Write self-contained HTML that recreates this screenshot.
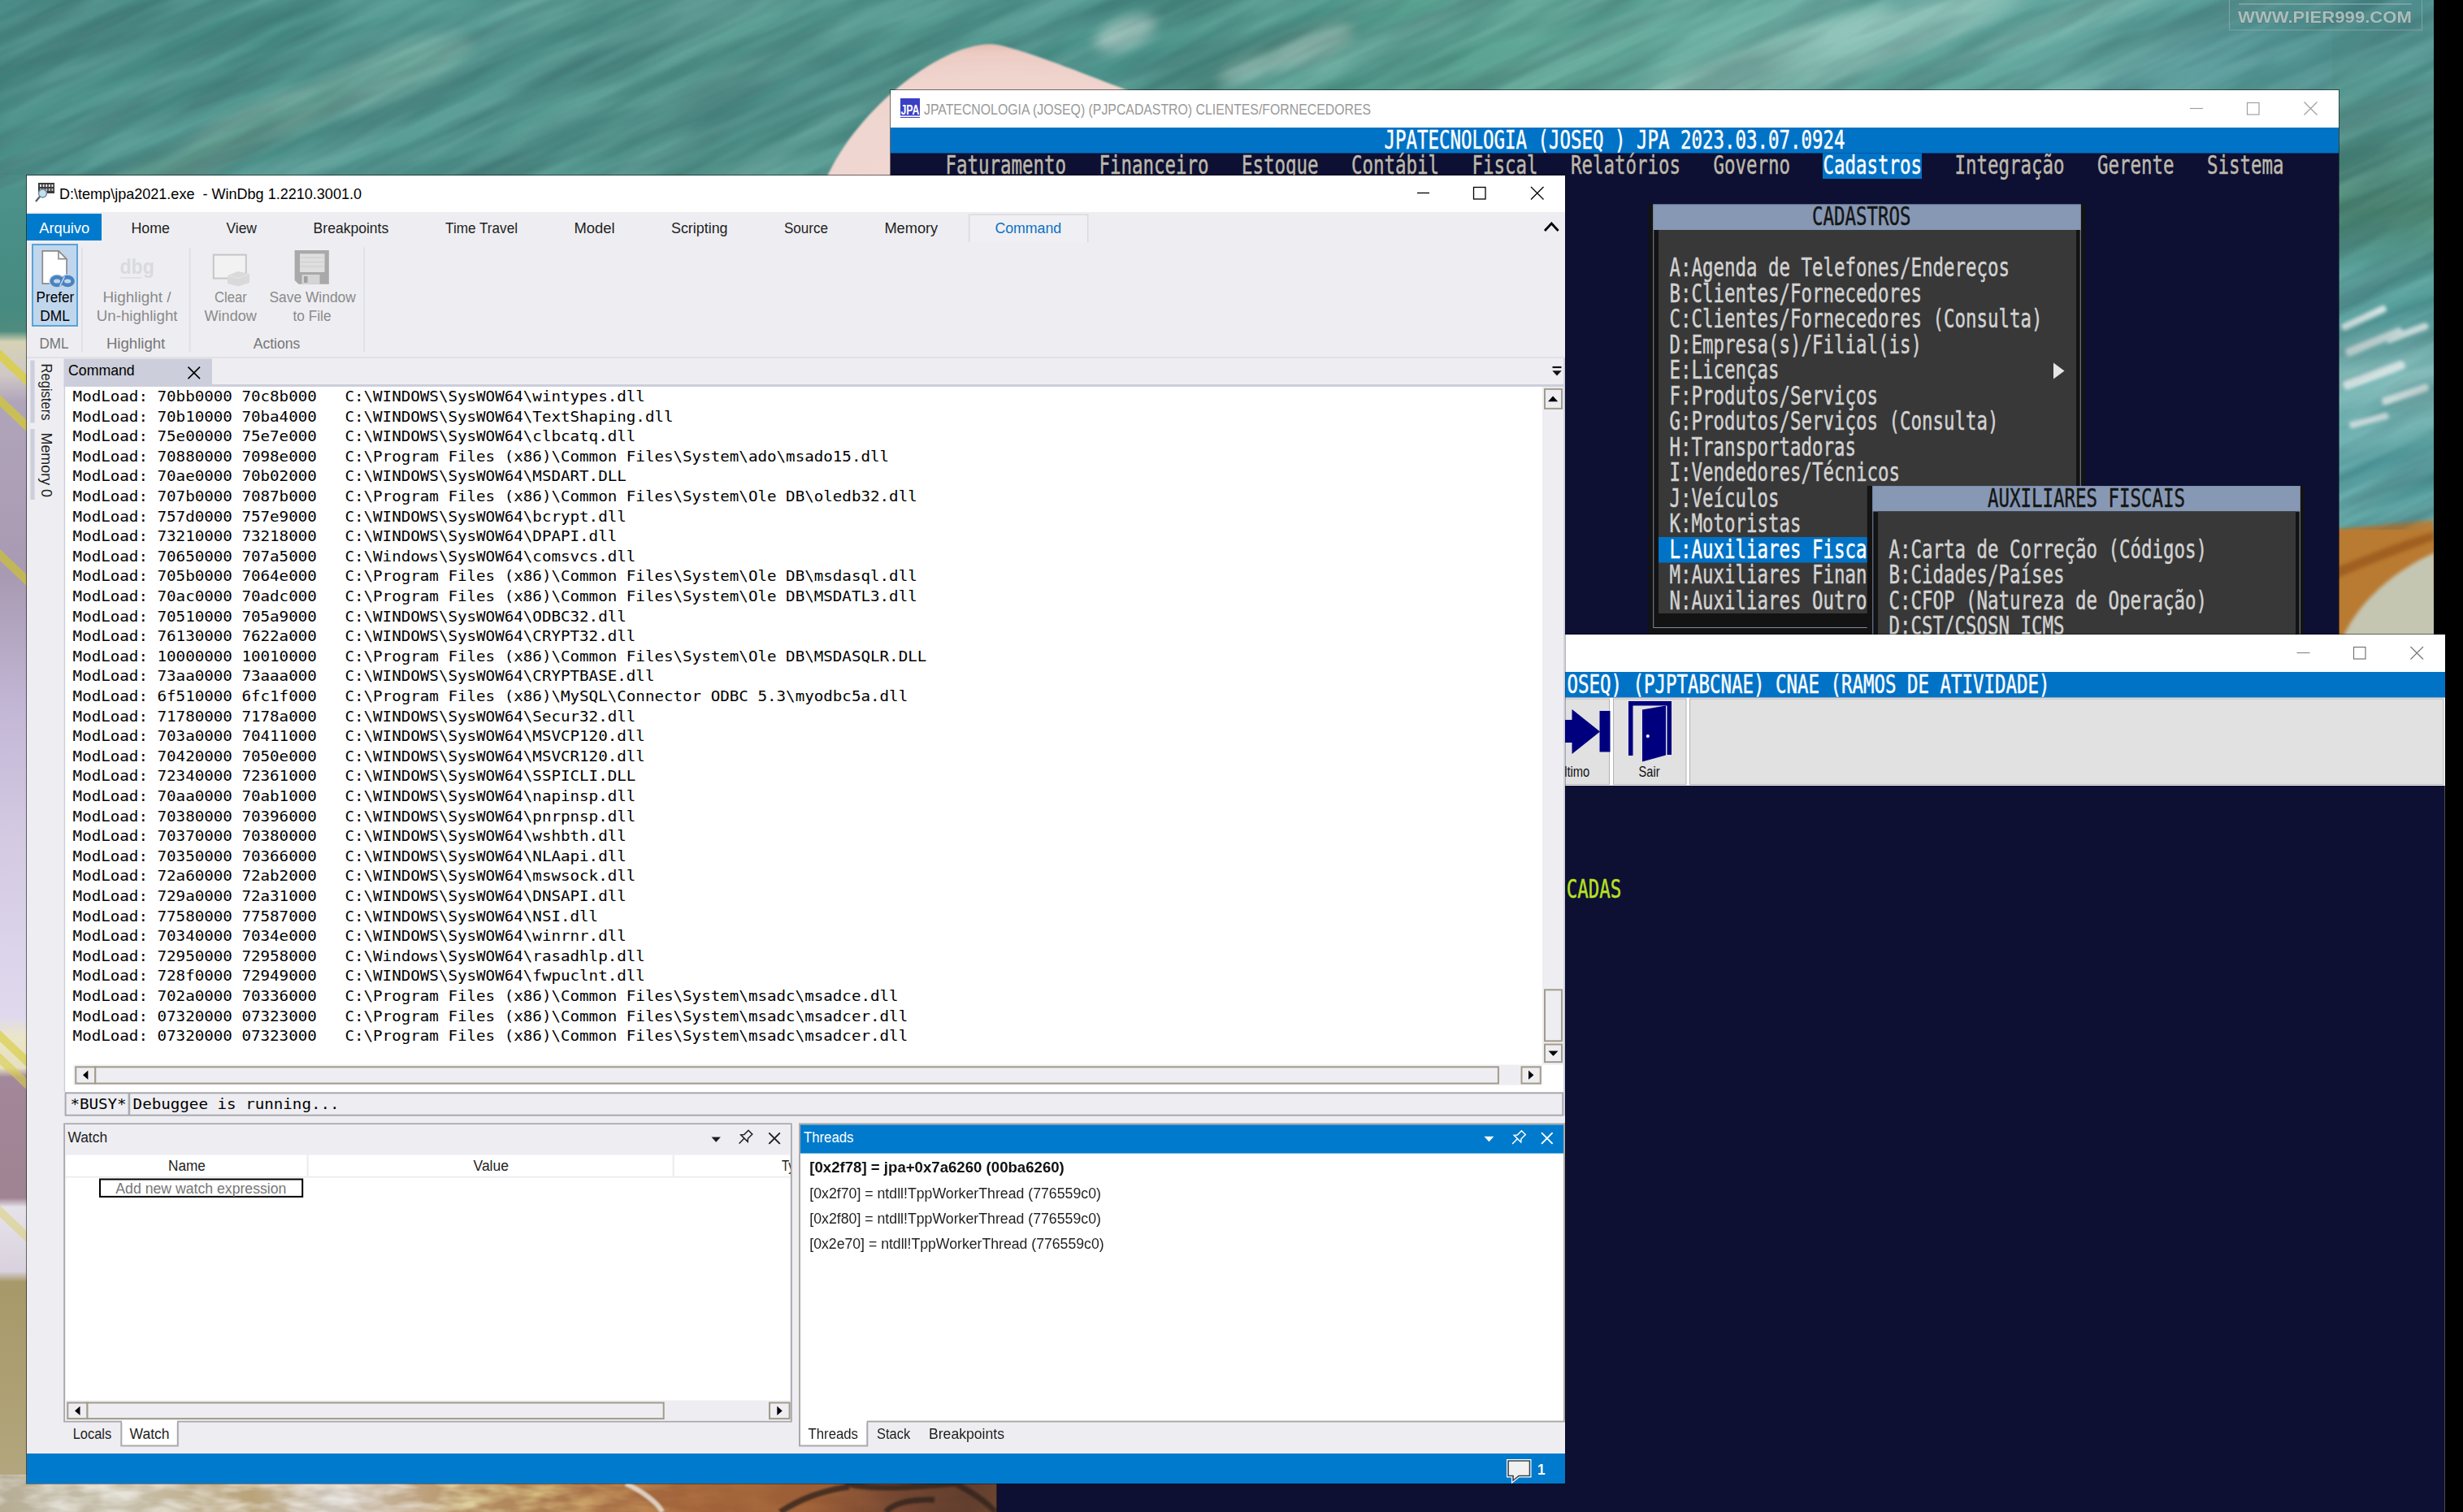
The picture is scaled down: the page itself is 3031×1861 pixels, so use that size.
<!DOCTYPE html>
<html lang="pt-BR"><head><meta charset="utf-8"><title>WinDbg - jpa2021.exe</title>
<style>
html,body{margin:0;padding:0;background:#000;overflow:hidden}
svg{display:block}
text{white-space:pre}
.s{font-family:"Liberation Sans",Arial,sans-serif}
.m{font-family:"Liberation Mono","DejaVu Sans Mono",monospace}
.d{font-family:"DejaVu Sans Mono","Liberation Mono",monospace}
</style></head><body>
<svg width="3031" height="1861" viewBox="0 0 3031 1861">
<defs>
<linearGradient id="gTop" x1="0" y1="0" x2="1" y2="0">
<stop offset="0" stop-color="#488d87"/><stop offset="0.15" stop-color="#50968f"/><stop offset="0.3" stop-color="#569a90"/><stop offset="0.45" stop-color="#4c938b"/><stop offset="0.6" stop-color="#57a08f"/><stop offset="0.74" stop-color="#69ada1"/><stop offset="0.86" stop-color="#5da29b"/><stop offset="1" stop-color="#529696"/>
</linearGradient>
<linearGradient id="gLeft" x1="0" y1="0" x2="0" y2="1">
<stop offset="0" stop-color="#4d938c"/><stop offset="0.1" stop-color="#468a80"/><stop offset="0.117" stop-color="#4f8c7e"/><stop offset="0.125" stop-color="#d6d2b4"/><stop offset="0.15" stop-color="#cfc8c6"/><stop offset="0.17" stop-color="#b0a4ba"/><stop offset="0.3" stop-color="#a89ab2"/><stop offset="0.4" stop-color="#c3b7d6"/><stop offset="0.5" stop-color="#d4cbe3"/><stop offset="0.63" stop-color="#e0d9ee"/><stop offset="0.645" stop-color="#ebe6c8"/><stop offset="0.668" stop-color="#e6dfc0"/><stop offset="0.675" stop-color="#a3879a"/><stop offset="0.765" stop-color="#a08493"/><stop offset="0.772" stop-color="#e6e2ea"/><stop offset="0.82" stop-color="#d9d2de"/><stop offset="0.828" stop-color="#a79969"/><stop offset="0.9" stop-color="#ad9f72"/><stop offset="1" stop-color="#b5a983"/>
</linearGradient>
<linearGradient id="gBot" x1="0" y1="0" x2="1" y2="0">
<stop offset="0" stop-color="#b7ad95"/><stop offset="0.12" stop-color="#c9c2ae"/><stop offset="0.25" stop-color="#b9a37a"/><stop offset="0.33" stop-color="#cfc7bd"/><stop offset="0.45" stop-color="#b8966a"/><stop offset="0.58" stop-color="#a9744a"/><stop offset="0.68" stop-color="#a3643a"/><stop offset="0.8" stop-color="#9c5e36"/><stop offset="0.9" stop-color="#704430"/><stop offset="0.96" stop-color="#5e3c2c"/><stop offset="1" stop-color="#6e4630"/>
</linearGradient>
<linearGradient id="gRight" x1="0" y1="0" x2="0" y2="1">
<stop offset="0" stop-color="#529696"/><stop offset="0.2" stop-color="#55968c"/><stop offset="0.33" stop-color="#4f8d76"/><stop offset="0.42" stop-color="#4f9892"/><stop offset="0.5" stop-color="#57a09e"/><stop offset="0.58" stop-color="#7fbab8"/><stop offset="0.66" stop-color="#6aadac"/><stop offset="0.72" stop-color="#559fa1"/><stop offset="0.82" stop-color="#5aa1a0"/><stop offset="0.845" stop-color="#b87a2e"/><stop offset="0.9" stop-color="#b9853f"/><stop offset="0.95" stop-color="#c9c3a6"/><stop offset="1" stop-color="#c4bfa2"/>
</linearGradient>
<radialGradient id="gSkin" cx="0.5" cy="1.0" r="1.02" gradientTransform="translate(0.03 0)">
<stop offset="0" stop-color="#f1d9d3"/><stop offset="0.75" stop-color="#efd5ce"/><stop offset="0.92" stop-color="#ecccc4"/><stop offset="1" stop-color="#e3b9ae"/>
</radialGradient>
<filter id="blur8" x="-10%" y="-10%" width="120%" height="120%"><feGaussianBlur stdDeviation="8"/></filter>
<filter id="tex" x="0" y="0" width="100%" height="100%"><feTurbulence type="fractalNoise" baseFrequency="0.004 0.035" numOctaves="3" seed="7"/><feColorMatrix type="matrix" values="0 0 0 0 0  0 0 0 0 0  0 0 0 0 0  2.2 0 0 0 -0.6" result="n"/><feFlood flood-color="#fff"/><feComposite in2="n" operator="in"/></filter>
<filter id="texD" x="0" y="0" width="100%" height="100%"><feTurbulence type="fractalNoise" baseFrequency="0.005 0.03" numOctaves="3" seed="23"/><feColorMatrix type="matrix" values="0 0 0 0 0  0 0 0 0 0  0 0 0 0 0  2.4 0 0 0 -0.75" result="n"/><feFlood flood-color="#0a2a30"/><feComposite in2="n" operator="in"/></filter>
<filter id="tex2" x="0" y="0" width="100%" height="100%"><feTurbulence type="fractalNoise" baseFrequency="0.02 0.06" numOctaves="3" seed="3"/><feColorMatrix type="matrix" values="0 0 0 0 1  0 0 0 0 1  0 0 0 0 1  2.6 0 0 0 -0.9"/></filter>
<filter id="blur1"><feGaussianBlur stdDeviation="1"/></filter>
<filter id="blur3"><feGaussianBlur stdDeviation="2"/></filter>
</defs>
<rect x="0" y="0" width="3031" height="1861" fill="#000"/>
<clipPath id="cWall"><rect x="0" y="0" width="2995" height="1861"/></clipPath><g clip-path="url(#cWall)">
<rect x="0" y="0" width="2995" height="232" fill="url(#gTop)"/>
<rect x="0" y="215" width="40" height="1646" fill="url(#gLeft)"/>
<path d="M0 430 L40 468 L40 482 L0 444Z" fill="#d9cf45" opacity="0.85"/>
<path d="M0 486 L40 524 L40 538 L0 500Z" fill="#cfc640" opacity="0.8"/>
<path d="M0 676 L40 714 L40 728 L0 690Z" fill="#c9c03c" opacity="0.75"/>
<path d="M0 1268 L40 1306 L40 1320 L0 1282Z" fill="#d8cf4a" opacity="0.7"/>
<path d="M0 1296 L40 1334 L40 1348 L0 1310Z" fill="#d8cf4a" opacity="0.6"/>
<path d="M0 1484 L40 1522 L40 1536 L0 1498Z" fill="#d9d068" opacity="0.5"/>
<rect x="2870" y="0" width="125" height="790" fill="url(#gRight)"/>
<path d="M2870 652 L2995 640 L2995 690 L2890 790 L2870 790Z" fill="#b97a30" filter="url(#blur3)"/>
<path d="M2880 792 C2900 740, 2950 700, 2997 680 L2997 792Z" fill="#c4c6b2" filter="url(#blur3)"/>
<path d="M2870 700 C2900 690, 2940 670, 2995 655 L2995 665 C2940 685, 2900 700, 2870 715Z" fill="#9a5a1e" filter="url(#blur3)" opacity="0.8"/>
<g filter="url(#blur3)" fill="#e6efee" opacity="0.85">
<rect x="2880" y="400" width="60" height="9" rx="4" transform="rotate(-25 2880 400)"/>
<rect x="2885" y="430" width="75" height="10" rx="4" transform="rotate(-22 2885 430)"/>
<rect x="2935" y="415" width="55" height="9" rx="4" transform="rotate(-20 2935 415)"/>
<rect x="2882" y="470" width="80" height="11" rx="4" transform="rotate(-20 2882 470)"/>
<rect x="2930" y="490" width="60" height="10" rx="4" transform="rotate(-18 2930 490)"/>
<rect x="2890" y="520" width="50" height="8" rx="4" transform="rotate(-15 2890 520)"/>
</g>
<g filter="url(#blur8)" opacity="0.5">
<ellipse cx="470" cy="95" rx="120" ry="30" fill="#8dbdad" transform="rotate(-22 470 95)"/>
<ellipse cx="330" cy="150" rx="110" ry="28" fill="#85b5a3" transform="rotate(-22 330 150)"/>
<ellipse cx="200" cy="215" rx="160" ry="22" fill="#7aaa98" transform="rotate(-22 200 215)"/>
<ellipse cx="120" cy="60" rx="200" ry="28" fill="#3f8078" transform="rotate(-22 120 60)"/>
<ellipse cx="1560" cy="70" rx="120" ry="16" fill="#3a7568" transform="rotate(-22 1560 70)"/>
<ellipse cx="2150" cy="90" rx="200" ry="30" fill="#a8d2c8" transform="rotate(-22 2150 90)"/>
<ellipse cx="2350" cy="40" rx="150" ry="25" fill="#9ccbc0" transform="rotate(-22 2350 40)"/>
<ellipse cx="1385" cy="40" rx="40" ry="18" fill="#e6f0e8" transform="rotate(-22 1385 40)"/>
<ellipse cx="1610" cy="60" rx="60" ry="14" fill="#d5e6dc" transform="rotate(-22 1610 60)"/>
<ellipse cx="1540" cy="85" rx="40" ry="10" fill="#cfe2d8" transform="rotate(-22 1540 85)"/>
<ellipse cx="820" cy="30" rx="220" ry="22" fill="#447f7a" transform="rotate(-22 820 30)"/>
<ellipse cx="700" cy="170" rx="200" ry="20" fill="#468680" transform="rotate(-22 700 170)"/>
<ellipse cx="2700" cy="80" rx="150" ry="36" fill="#4f8f92" transform="rotate(-22 2700 80)"/>
<ellipse cx="1800" cy="20" rx="200" ry="22" fill="#65a79b" transform="rotate(-22 1800 20)"/>
<ellipse cx="960" cy="120" rx="120" ry="30" fill="#4a8a86" transform="rotate(-22 960 120)"/>
<ellipse cx="2550" cy="20" rx="120" ry="18" fill="#7dbcb0" transform="rotate(-22 2550 20)"/>
</g>
<rect x="0" y="1815" width="1240" height="50" fill="url(#gBot)"/>
<clipPath id="cTop"><rect x="0" y="0" width="2995" height="232"/><rect x="2870" y="232" width="125" height="420"/></clipPath>
<g clip-path="url(#cTop)" style="mix-blend-mode:soft-light" opacity="0.3"><rect x="0" y="0" width="2995" height="2000" filter="url(#tex)" transform="skewY(-24)"/></g>
<g clip-path="url(#cTop)" opacity="0.22"><rect x="0" y="0" width="2995" height="2000" filter="url(#texD)" transform="skewY(-24)"/></g>
<linearGradient id="gFade" x1="0" y1="0" x2="1" y2="0"><stop offset="0" stop-color="#fff"/><stop offset="0.5" stop-color="#fff"/><stop offset="0.72" stop-color="#222"/><stop offset="1" stop-color="#111"/></linearGradient><mask id="mFade"><rect x="0" y="1815" width="1240" height="50" fill="url(#gFade)"/></mask>
<g mask="url(#mFade)" style="mix-blend-mode:overlay" opacity="0.55"><rect x="0" y="1815" width="1240" height="50" filter="url(#tex2)"/></g>
<g fill="none" stroke="#2e211c" stroke-width="7" opacity="0.75" filter="url(#blur1)"><path d="M960 1861 C985 1845,1010 1835,1045 1830"/><path d="M1040 1826 C1080 1835,1130 1830,1175 1826 C1195 1835,1215 1850,1225 1861"/><path d="M1090 1861 C1100 1850,1120 1845,1150 1846"/></g>
<path d="M770 1826 C790 1835,810 1850,815 1861" fill="none" stroke="#e9e6e0" stroke-width="6" opacity="0.8" filter="url(#blur1)"/>
<path d="M 1012 232 C 1045 142.5, 1153 54.3, 1219 54.3 C 1244.5 54.3, 1339 93, 1430 127.6 L 1430 232 Z" fill="url(#gSkin)" filter="url(#blur1)"/>
<rect x="2743.5" y="-2" width="237" height="39" fill="none" stroke="#9fb5b2" stroke-width="1" opacity="0.6"/>
<line x1="2755" y1="5" x2="2968" y2="5" stroke="#a9bdb9" stroke-width="1.5" opacity="0.6"/>
<text class="s" x="2754" y="27.5" font-size="21" fill="#b3c3c2" textLength="214" lengthAdjust="spacingAndGlyphs" font-weight="bold" stroke="#56706e" stroke-width="0.8" paint-order="stroke" opacity="0.9">WWW.PIER999.COM</text>
</g>
<rect x="1095" y="110" width="1784" height="900" fill="#000" opacity="0.5"/>
<rect x="1096" y="111" width="1782" height="46" fill="#fff"/>
<rect x="1096" y="157" width="1782" height="850" fill="#0d1033"/>
<rect x="1096" y="157" width="1782" height="31.5" fill="#0173c7"/>
<rect x="1108" y="121" width="24" height="24" fill="#3a3fc4"/>
<text class="s" x="1108.5" y="141" font-size="17" fill="#fff" textLength="23" lengthAdjust="spacingAndGlyphs" font-weight="bold">JPA</text>
<line x1="1108" y1="143.2" x2="1132" y2="143.2" stroke="#fff" stroke-width="1.6" />
<text class="s" x="1137" y="140.5" font-size="18.4" fill="#999" textLength="550" lengthAdjust="spacingAndGlyphs">JPATECNOLOGIA (JOSEQ) (PJPCADASTRO) CLIENTES/FORNECEDORES</text>
<line x1="2695" y1="133.5" x2="2711" y2="133.5" stroke="#a0a0a0" stroke-width="1.2" />
<rect x="2765.5" y="126.5" width="14.5" height="14.5" fill="none" stroke="#a0a0a0" stroke-width="1.2"/>
<path d="M2835.5 125.5 L2851.5 141.5 M2851.5 125.5 L2835.5 141.5" fill="none" stroke="#a0a0a0" stroke-width="1.2"/>
<text class="d" x="1703.5" y="182.6" font-size="31.5" fill="#fff" textLength="567" lengthAdjust="spacingAndGlyphs" stroke="#fff" stroke-width="0.5" >JPATECNOLOGIA (JOSEQ ) JPA 2023.03.07.0924</text>
<text class="d" x="1163.5" y="214.1" font-size="31.5" fill="#bdb8aa" textLength="148.5" lengthAdjust="spacingAndGlyphs" stroke="#bdb8aa" stroke-width="0.5" >Faturamento</text>
<text class="d" x="1352.5" y="214.1" font-size="31.5" fill="#bdb8aa" textLength="135" lengthAdjust="spacingAndGlyphs" stroke="#bdb8aa" stroke-width="0.5" >Financeiro</text>
<text class="d" x="1528" y="214.1" font-size="31.5" fill="#bdb8aa" textLength="94.5" lengthAdjust="spacingAndGlyphs" stroke="#bdb8aa" stroke-width="0.5" >Estoque</text>
<text class="d" x="1663" y="214.1" font-size="31.5" fill="#bdb8aa" textLength="108" lengthAdjust="spacingAndGlyphs" stroke="#bdb8aa" stroke-width="0.5" >Contábil</text>
<text class="d" x="1811.5" y="214.1" font-size="31.5" fill="#bdb8aa" textLength="81" lengthAdjust="spacingAndGlyphs" stroke="#bdb8aa" stroke-width="0.5" >Fiscal</text>
<text class="d" x="1933" y="214.1" font-size="31.5" fill="#bdb8aa" textLength="135" lengthAdjust="spacingAndGlyphs" stroke="#bdb8aa" stroke-width="0.5" >Relatórios</text>
<text class="d" x="2108.5" y="214.1" font-size="31.5" fill="#bdb8aa" textLength="94.5" lengthAdjust="spacingAndGlyphs" stroke="#bdb8aa" stroke-width="0.5" >Governo</text>
<rect x="2243" y="188.5" width="122" height="31.5" fill="#0173c7"/>
<text class="d" x="2243.5" y="214.1" font-size="31.5" fill="#fff" textLength="121.5" lengthAdjust="spacingAndGlyphs" stroke="#fff" stroke-width="0.5" >Cadastros</text>
<text class="d" x="2405.5" y="214.1" font-size="31.5" fill="#bdb8aa" textLength="135" lengthAdjust="spacingAndGlyphs" stroke="#bdb8aa" stroke-width="0.5" >Integração</text>
<text class="d" x="2581" y="214.1" font-size="31.5" fill="#bdb8aa" textLength="94.5" lengthAdjust="spacingAndGlyphs" stroke="#bdb8aa" stroke-width="0.5" >Gerente</text>
<text class="d" x="2716" y="214.1" font-size="31.5" fill="#bdb8aa" textLength="94.5" lengthAdjust="spacingAndGlyphs" stroke="#bdb8aa" stroke-width="0.5" >Sistema</text>
<rect x="2028.5" y="251.5" width="537.5" height="540" fill="#131313"/>
<rect x="2034.25" y="251.5" width="526.5" height="31.5" fill="#8798b4"/>
<rect x="2034.75" y="252" width="525.5" height="520.5" fill="none" stroke="#7b8cab" stroke-width="1"/>
<rect x="2041" y="283" width="514" height="472" fill="#383838"/>
<text class="d" x="2230" y="277.1" font-size="31.5" fill="#151515" textLength="121.5" lengthAdjust="spacingAndGlyphs" stroke="#151515" stroke-width="0.5" >CADASTROS</text>
<text class="d" x="2054.5" y="340.1" font-size="31.5" fill="#d2d2d2" textLength="418.5" lengthAdjust="spacingAndGlyphs" stroke="#d2d2d2" stroke-width="0.5" >A:Agenda de Telefones/Endereços</text>
<text class="d" x="2054.5" y="371.6" font-size="31.5" fill="#d2d2d2" textLength="310.5" lengthAdjust="spacingAndGlyphs" stroke="#d2d2d2" stroke-width="0.5" >B:Clientes/Fornecedores</text>
<text class="d" x="2054.5" y="403.1" font-size="31.5" fill="#d2d2d2" textLength="459" lengthAdjust="spacingAndGlyphs" stroke="#d2d2d2" stroke-width="0.5" >C:Clientes/Fornecedores (Consulta)</text>
<text class="d" x="2054.5" y="434.6" font-size="31.5" fill="#d2d2d2" textLength="310.5" lengthAdjust="spacingAndGlyphs" stroke="#d2d2d2" stroke-width="0.5" >D:Empresa(s)/Filial(is)</text>
<text class="d" x="2054.5" y="466.1" font-size="31.5" fill="#d2d2d2" textLength="135" lengthAdjust="spacingAndGlyphs" stroke="#d2d2d2" stroke-width="0.5" >E:Licenças</text>
<text class="d" x="2054.5" y="497.6" font-size="31.5" fill="#d2d2d2" textLength="256.5" lengthAdjust="spacingAndGlyphs" stroke="#d2d2d2" stroke-width="0.5" >F:Produtos/Serviços</text>
<text class="d" x="2054.5" y="529.1" font-size="31.5" fill="#d2d2d2" textLength="405" lengthAdjust="spacingAndGlyphs" stroke="#d2d2d2" stroke-width="0.5" >G:Produtos/Serviços (Consulta)</text>
<text class="d" x="2054.5" y="560.6" font-size="31.5" fill="#d2d2d2" textLength="229.5" lengthAdjust="spacingAndGlyphs" stroke="#d2d2d2" stroke-width="0.5" >H:Transportadoras</text>
<text class="d" x="2054.5" y="592.1" font-size="31.5" fill="#d2d2d2" textLength="283.5" lengthAdjust="spacingAndGlyphs" stroke="#d2d2d2" stroke-width="0.5" >I:Vendedores/Técnicos</text>
<text class="d" x="2054.5" y="623.6" font-size="31.5" fill="#d2d2d2" textLength="135" lengthAdjust="spacingAndGlyphs" stroke="#d2d2d2" stroke-width="0.5" >J:Veículos</text>
<text class="d" x="2054.5" y="655.1" font-size="31.5" fill="#d2d2d2" textLength="162" lengthAdjust="spacingAndGlyphs" stroke="#d2d2d2" stroke-width="0.5" >K:Motoristas</text>
<rect x="2041" y="661" width="270" height="31.5" fill="#0173c7"/>
<text class="d" x="2054.5" y="686.6" font-size="31.5" fill="#fff" textLength="270" lengthAdjust="spacingAndGlyphs" stroke="#fff" stroke-width="0.5" >L:Auxiliares Fiscais</text>
<text class="d" x="2054.5" y="718.1" font-size="31.5" fill="#d2d2d2" textLength="324" lengthAdjust="spacingAndGlyphs" stroke="#d2d2d2" stroke-width="0.5" >M:Auxiliares Financeiros</text>
<text class="d" x="2054.5" y="749.6" font-size="31.5" fill="#d2d2d2" textLength="256.5" lengthAdjust="spacingAndGlyphs" stroke="#d2d2d2" stroke-width="0.5" >N:Auxiliares Outros</text>
<path d="M2527 446.5 L2540.5 456.5 L2527 466.5Z" fill="#e6e6e6"/>
<rect x="2297.8" y="598" width="537.7" height="200" fill="#131313"/>
<rect x="2304.25" y="598" width="526.5" height="31.5" fill="#8798b4"/>
<rect x="2304.75" y="598.5" width="525.5" height="200" fill="none" stroke="#7b8cab" stroke-width="1"/>
<rect x="2311" y="629.5" width="514" height="170" fill="#383838"/>
<text class="d" x="2446" y="623.6" font-size="31.5" fill="#151515" textLength="243" lengthAdjust="spacingAndGlyphs" stroke="#151515" stroke-width="0.5" >AUXILIARES FISCAIS</text>
<text class="d" x="2324.5" y="686.6" font-size="31.5" fill="#d2d2d2" textLength="391.5" lengthAdjust="spacingAndGlyphs" stroke="#d2d2d2" stroke-width="0.5" >A:Carta de Correção (Códigos)</text>
<text class="d" x="2324.5" y="718.1" font-size="31.5" fill="#d2d2d2" textLength="216" lengthAdjust="spacingAndGlyphs" stroke="#d2d2d2" stroke-width="0.5" >B:Cidades/Países</text>
<text class="d" x="2324.5" y="749.6" font-size="31.5" fill="#d2d2d2" textLength="391.5" lengthAdjust="spacingAndGlyphs" stroke="#d2d2d2" stroke-width="0.5" >C:CFOP (Natureza de Operação)</text>
<text class="d" x="2324.5" y="781.1" font-size="31.5" fill="#d2d2d2" textLength="216" lengthAdjust="spacingAndGlyphs" stroke="#d2d2d2" stroke-width="0.5" >D:CST/CSOSN ICMS</text>
<rect x="1226" y="780" width="1784" height="1100" fill="#000" opacity="0.5"/>
<rect x="1227" y="781" width="1782" height="46" fill="#fff"/>
<rect x="1227" y="827" width="1782" height="1040" fill="#0d1033"/>
<rect x="1227" y="827" width="1782" height="31.5" fill="#0173c7"/>
<rect x="3008" y="858" width="1" height="1010" fill="#4a4a55"/>
<line x1="2826.5" y1="803.5" x2="2842.5" y2="803.5" stroke="#8a8a8a" stroke-width="1.2" />
<rect x="2896.5" y="796.5" width="14.5" height="14.5" fill="none" stroke="#777" stroke-width="1.2"/>
<path d="M2966.5 796 L2982 811.5 M2982 796 L2966.5 811.5" fill="none" stroke="#777" stroke-width="1.2"/>
<text class="d" x="1712.5" y="852.6" font-size="31.5" fill="#fff" textLength="810" lengthAdjust="spacingAndGlyphs" stroke="#fff" stroke-width="0.5">JPATECNOLOGIA (JOSEQ) (PJPTABCNAE) CNAE (RAMOS DE ATIVIDADE)</text>
<rect x="1227" y="858.5" width="1782" height="108.5" fill="#fff"/>
<rect x="1895.5" y="860" width="85" height="105.5" fill="#e1e1e1" stroke="#b4b4b4" stroke-width="1"/>
<rect x="1985.5" y="860" width="89.5" height="105.5" fill="#e1e1e1" stroke="#b4b4b4" stroke-width="1"/>
<rect x="2079.5" y="860" width="927.5" height="105.5" fill="#e1e1e1" stroke="#b4b4b4" stroke-width="1"/>
<path d="M1926 886 L1934.5 886 L1934.5 873 L1969 900.5 L1934.5 928 L1934.5 914 L1926 914Z" fill="#00007f"/>
<rect x="1968.5" y="875" width="13" height="50.5" fill="#00007f"/>
<text class="s" x="1914.5" y="955.5" font-size="19" fill="#111" textLength="41.7" lengthAdjust="spacingAndGlyphs">Último</text>
<path d="M2004 863 L2057 863 L2057 929 L2051.5 929 L2051.5 868.5 L2009.5 868.5 L2009.5 930 L2004 930Z" fill="#00007f"/>
<path d="M2021 873.5 L2050 868.5 L2050 929.5 L2021 937.5Z" fill="#00007f"/>
<circle cx="2027.8" cy="906" r="2" fill="#fff"/>
<text class="s" x="2016.5" y="955.5" font-size="19" fill="#111" textLength="26" lengthAdjust="spacingAndGlyphs">Sair</text>
<text class="d" x="1819.7" y="1105" font-size="31.5" fill="#b8e022" textLength="175.5" lengthAdjust="spacingAndGlyphs" stroke="#b8e022" stroke-width="0.5">CLASSIFICADAS</text>
<rect x="32" y="215" width="1894.5" height="1611.7" fill="#000" opacity="0.55"/>
<rect x="33" y="216" width="1893" height="45" fill="#fff"/>
<rect x="33" y="261" width="1893" height="1565" fill="#eeeef2"/>
<rect x="47" y="225" width="20" height="13" fill="#3b3b3b"/>
<rect x="49" y="227" width="2" height="3" fill="#e8e8e8"/>
<rect x="49" y="232" width="2" height="3" fill="#bdbdbd"/>
<rect x="52.6" y="227" width="2" height="3" fill="#e8e8e8"/>
<rect x="52.6" y="232" width="2" height="3" fill="#bdbdbd"/>
<rect x="56.2" y="227" width="2" height="3" fill="#e8e8e8"/>
<rect x="56.2" y="232" width="2" height="3" fill="#bdbdbd"/>
<rect x="59.8" y="227" width="2" height="3" fill="#e8e8e8"/>
<rect x="59.8" y="232" width="2" height="3" fill="#bdbdbd"/>
<rect x="63.4" y="227" width="2" height="3" fill="#e8e8e8"/>
<rect x="63.4" y="232" width="2" height="3" fill="#bdbdbd"/>
<circle cx="52.5" cy="238" r="5" fill="#bfe0f5" stroke="#7a8a95" stroke-width="1.5"/>
<line x1="49" y1="242" x2="44" y2="248" stroke="#55626b" stroke-width="2.2" />
<text class="s" x="73" y="245.3" font-size="18.6" fill="#000" textLength="372" lengthAdjust="spacingAndGlyphs">D:\temp\jpa2021.exe  - WinDbg 1.2210.3001.0</text>
<line x1="1744" y1="237.5" x2="1759" y2="237.5" stroke="#000" stroke-width="1.3" />
<rect x="1813.5" y="230.5" width="14.5" height="14.5" fill="none" stroke="#000" stroke-width="1.3"/>
<path d="M1884 230 L1899.5 245.5 M1899.5 230 L1884 245.5" fill="none" stroke="#000" stroke-width="1.3"/>
<rect x="33" y="263" width="92" height="33" fill="#007acc"/>
<text class="s" x="48.2" y="286.8" font-size="18.8" fill="#fff" textLength="62" lengthAdjust="spacingAndGlyphs">Arquivo</text>
<text class="s" x="161.5" y="286.8" font-size="18.8" fill="#1e1e1e" textLength="47.5" lengthAdjust="spacingAndGlyphs">Home</text>
<text class="s" x="278.4" y="286.8" font-size="18.8" fill="#1e1e1e" textLength="37.6" lengthAdjust="spacingAndGlyphs">View</text>
<text class="s" x="385.6" y="286.8" font-size="18.8" fill="#1e1e1e" textLength="92.6" lengthAdjust="spacingAndGlyphs">Breakpoints</text>
<text class="s" x="548.1" y="286.8" font-size="18.8" fill="#1e1e1e" textLength="88.9" lengthAdjust="spacingAndGlyphs">Time Travel</text>
<text class="s" x="706.5" y="286.8" font-size="18.8" fill="#1e1e1e" textLength="50.1" lengthAdjust="spacingAndGlyphs">Model</text>
<text class="s" x="826" y="286.8" font-size="18.8" fill="#1e1e1e" textLength="69.5" lengthAdjust="spacingAndGlyphs">Scripting</text>
<text class="s" x="965" y="286.8" font-size="18.8" fill="#1e1e1e" textLength="54" lengthAdjust="spacingAndGlyphs">Source</text>
<text class="s" x="1088.4" y="286.8" font-size="18.8" fill="#1e1e1e" textLength="65.8" lengthAdjust="spacingAndGlyphs">Memory</text>
<path d="M1192.7 298 L1192.7 264.2 L1338.7 264.2 L1338.7 298" fill="#f0f0f4" stroke="#dadade" stroke-width="1.5"/>
<text class="s" x="1224.4" y="286.8" font-size="18.8" fill="#0e70c0" textLength="81.8" lengthAdjust="spacingAndGlyphs">Command</text>
<path d="M1901 284 L1909.3 275 L1917.6 284" fill="none" stroke="#000" stroke-width="2.8"/>
<rect x="40" y="301" width="55" height="100" fill="#c0d6ec" stroke="#5ba3d9" stroke-width="2"/>
<path d="M52.3 308.8 L72 308.8 L82.1 318.8 L82.1 349.1 L52.3 349.1Z" fill="#fff" stroke="#8a8a8a" stroke-width="1.7"/>
<path d="M72 309 L72 318.6 L82 318.6" fill="none" stroke="#8a8a8a" stroke-width="1.6"/>
<g fill="#c0d6ec" stroke="#c0d6ec" stroke-width="7"><ellipse cx="70.1" cy="346" rx="6.4" ry="4.9"/><ellipse cx="83.2" cy="346" rx="6.4" ry="4.9"/></g>
<g fill="none" stroke="#4a82be" stroke-width="4.6"><ellipse cx="70.1" cy="346" rx="6.4" ry="4.9"/><ellipse cx="83.2" cy="346" rx="6.4" ry="4.9"/></g>
<line x1="79.4" y1="340.4" x2="73.6" y2="352.4" stroke="#c9dcef" stroke-width="1.3" />
<text class="s" x="44.6" y="371.8" font-size="17.6" fill="#000" textLength="46.5" lengthAdjust="spacingAndGlyphs">Prefer</text>
<text class="s" x="49.3" y="395.4" font-size="17.6" fill="#000" textLength="36.6" lengthAdjust="spacingAndGlyphs">DML</text>
<text class="s" x="147.4" y="336.8" font-size="25" fill="#dadade" textLength="42.5" lengthAdjust="spacingAndGlyphs" font-weight="bold">dbg</text>
<line x1="147.5" y1="342" x2="175" y2="342" stroke="#dedee2" stroke-width="1.6" />
<text class="s" x="126.5" y="371.8" font-size="17.6" fill="#8a8a8a" textLength="83.9" lengthAdjust="spacingAndGlyphs">Highlight /</text>
<text class="s" x="118.8" y="395.4" font-size="17.6" fill="#8a8a8a" textLength="99.7" lengthAdjust="spacingAndGlyphs">Un-highlight</text>
<rect x="262.8" y="313.6" width="40" height="29" fill="#f2f2f2" stroke="#c6c6c6" stroke-width="2"/>
<path d="M280 339 L293 334 L307 337 L307 348 L293 352.5 L280 349Z" fill="#d9d9d9"/>
<path d="M280 339 L293 342.5 L307 337" fill="none" stroke="#e6e6e6" stroke-width="1"/>
<text class="s" x="264" y="371.8" font-size="17.6" fill="#8a8a8a" textLength="39.8" lengthAdjust="spacingAndGlyphs">Clear</text>
<text class="s" x="251.5" y="395.4" font-size="17.6" fill="#8a8a8a" textLength="64.3" lengthAdjust="spacingAndGlyphs">Window</text>
<path d="M362.6 308 L404.8 308 L404.8 349.8 L367.5 349.8 L362.6 345Z" fill="#a9a9a9"/>
<rect x="369" y="312.3" width="30.5" height="22.7" fill="#dedede"/>
<line x1="369" y1="317" x2="399.5" y2="317" stroke="#cfcfcf" stroke-width="1.2" />
<line x1="369" y1="322.5" x2="399.5" y2="322.5" stroke="#cfcfcf" stroke-width="1.2" />
<line x1="369" y1="328" x2="399.5" y2="328" stroke="#cfcfcf" stroke-width="1.2" />
<rect x="371.5" y="338" width="22" height="11.8" fill="#d4d4d4"/>
<rect x="374" y="340" width="4.5" height="8" fill="#a0a0a0"/>
<text class="s" x="331.5" y="371.8" font-size="17.6" fill="#8a8a8a" textLength="106.3" lengthAdjust="spacingAndGlyphs">Save Window</text>
<text class="s" x="360.5" y="395.4" font-size="17.6" fill="#8a8a8a" textLength="47" lengthAdjust="spacingAndGlyphs">to File</text>
<text class="s" x="48.4" y="428.8" font-size="17.6" fill="#767676" textLength="36.1" lengthAdjust="spacingAndGlyphs">DML</text>
<text class="s" x="130.9" y="428.8" font-size="17.6" fill="#767676" textLength="72.4" lengthAdjust="spacingAndGlyphs">Highlight</text>
<text class="s" x="311.7" y="428.8" font-size="17.6" fill="#767676" textLength="57.7" lengthAdjust="spacingAndGlyphs">Actions</text>
<line x1="100.9" y1="304.5" x2="100.9" y2="433" stroke="#dcdce0" stroke-width="1.4" />
<line x1="233.6" y1="304.5" x2="233.6" y2="433" stroke="#dcdce0" stroke-width="1.4" />
<line x1="448" y1="304.5" x2="448" y2="433" stroke="#dcdce0" stroke-width="1.4" />
<line x1="33" y1="440.2" x2="1926" y2="440.2" stroke="#dadadd" stroke-width="1.3" />
<rect x="78.5" y="441.5" width="182.5" height="33" fill="#cccedb"/>
<rect x="78.5" y="473" width="1846" height="3" fill="#cccedb"/>
<text class="s" x="84" y="462.4" font-size="17.6" fill="#000" textLength="81.7" lengthAdjust="spacingAndGlyphs">Command</text>
<path d="M231.5 451.6 L246 466.1 M246 451.6 L231.5 466.1" fill="none" stroke="#000" stroke-width="1.6"/>
<path d="M1910.5 452 L1921.5 452" fill="none" stroke="#111" stroke-width="2.2"/>
<path d="M1910.3 456.3 L1921.7 456.3 L1916 462.6Z" fill="#111"/>
<rect x="37.4" y="443.5" width="5.2" height="77" fill="#cccedb"/>
<rect x="37.4" y="528" width="5.2" height="87" fill="#cccedb"/>
<text class="s" font-size="17.6" fill="#1e1e1e" transform="translate(50.5 447.5) rotate(90)" textLength="70" lengthAdjust="spacingAndGlyphs">Registers</text>
<text class="s" font-size="17.6" fill="#1e1e1e" transform="translate(50.5 532.5) rotate(90)" textLength="79.5" lengthAdjust="spacingAndGlyphs">Memory 0</text>
<rect x="78.7" y="476" width="1.6" height="868" fill="#cccedb"/>
<rect x="80.3" y="476" width="1844" height="868" fill="#fff"/>
<rect x="1898" y="476" width="26" height="834.5" fill="#eeeef2"/>
<rect x="1901" y="478.9" width="21" height="24" fill="#eeeef2" stroke="#a39c8c" stroke-width="2"/>
<path d="M1905 494.2 L1911.1 487.4 L1917.2 494.2Z" fill="#000"/>
<rect x="1901" y="1218.3" width="21" height="63" fill="#eeeef2" stroke="#a39c8c" stroke-width="2"/>
<rect x="1901" y="1285.5" width="21" height="21.6" fill="#eeeef2" stroke="#a39c8c" stroke-width="2"/>
<path d="M1905.5 1293.5 L1917.5 1293.5 L1911.5 1299.8Z" fill="#000"/>
<rect x="90.5" y="1310.5" width="1807.5" height="25" fill="#eeeef2"/>
<rect x="93.3" y="1313.3" width="24" height="20.2" fill="#eeeef2" stroke="#a39c8c" stroke-width="2"/>
<path d="M108.4 1317.6 L108.4 1328.8 L102 1323.2Z" fill="#000"/>
<rect x="117.3" y="1313.3" width="1726.6" height="20.2" fill="#eeeef2" stroke="#a39c8c" stroke-width="2"/>
<rect x="1872.5" y="1313.3" width="23.2" height="20.2" fill="#eeeef2" stroke="#a39c8c" stroke-width="2"/>
<path d="M1881 1317.6 L1881 1328.8 L1887.4 1323.2Z" fill="#000"/>
<g class="d" font-size="18.4" fill="#000" xml:space="preserve">
<text x="89.6" y="494" textLength="704.306" lengthAdjust="spacingAndGlyphs">ModLoad: 70bb0000 70c8b000   C:\WINDOWS\SysWOW64\wintypes.dll</text>
<text x="89.6" y="518.6" textLength="738.944" lengthAdjust="spacingAndGlyphs">ModLoad: 70b10000 70ba4000   C:\WINDOWS\SysWOW64\TextShaping.dll</text>
<text x="89.6" y="543.2" textLength="692.76" lengthAdjust="spacingAndGlyphs">ModLoad: 75e00000 75e7e000   C:\WINDOWS\SysWOW64\clbcatq.dll</text>
<text x="89.6" y="567.8" textLength="1004.5" lengthAdjust="spacingAndGlyphs">ModLoad: 70880000 7098e000   C:\Program Files (x86)\Common Files\System\ado\msado15.dll</text>
<text x="89.6" y="592.4" textLength="681.214" lengthAdjust="spacingAndGlyphs">ModLoad: 70ae0000 70b02000   C:\WINDOWS\SysWOW64\MSDART.DLL</text>
<text x="89.6" y="617" textLength="1039.14" lengthAdjust="spacingAndGlyphs">ModLoad: 707b0000 7087b000   C:\Program Files (x86)\Common Files\System\Ole DB\oledb32.dll</text>
<text x="89.6" y="641.6" textLength="681.214" lengthAdjust="spacingAndGlyphs">ModLoad: 757d0000 757e9000   C:\WINDOWS\SysWOW64\bcrypt.dll</text>
<text x="89.6" y="666.2" textLength="669.668" lengthAdjust="spacingAndGlyphs">ModLoad: 73210000 73218000   C:\WINDOWS\SysWOW64\DPAPI.dll</text>
<text x="89.6" y="690.8" textLength="692.76" lengthAdjust="spacingAndGlyphs">ModLoad: 70650000 707a5000   C:\Windows\SysWOW64\comsvcs.dll</text>
<text x="89.6" y="715.4" textLength="1039.14" lengthAdjust="spacingAndGlyphs">ModLoad: 705b0000 7064e000   C:\Program Files (x86)\Common Files\System\Ole DB\msdasql.dll</text>
<text x="89.6" y="740" textLength="1039.14" lengthAdjust="spacingAndGlyphs">ModLoad: 70ac0000 70adc000   C:\Program Files (x86)\Common Files\System\Ole DB\MSDATL3.dll</text>
<text x="89.6" y="764.6" textLength="681.214" lengthAdjust="spacingAndGlyphs">ModLoad: 70510000 705a9000   C:\WINDOWS\SysWOW64\ODBC32.dll</text>
<text x="89.6" y="789.2" textLength="692.76" lengthAdjust="spacingAndGlyphs">ModLoad: 76130000 7622a000   C:\WINDOWS\SysWOW64\CRYPT32.dll</text>
<text x="89.6" y="813.8" textLength="1050.69" lengthAdjust="spacingAndGlyphs">ModLoad: 10000000 10010000   C:\Program Files (x86)\Common Files\System\Ole DB\MSDASQLR.DLL</text>
<text x="89.6" y="838.4" textLength="715.852" lengthAdjust="spacingAndGlyphs">ModLoad: 73aa0000 73aaa000   C:\WINDOWS\SysWOW64\CRYPTBASE.dll</text>
<text x="89.6" y="863" textLength="1027.59" lengthAdjust="spacingAndGlyphs">ModLoad: 6f510000 6fc1f000   C:\Program Files (x86)\MySQL\Connector ODBC 5.3\myodbc5a.dll</text>
<text x="89.6" y="887.6" textLength="692.76" lengthAdjust="spacingAndGlyphs">ModLoad: 71780000 7178a000   C:\WINDOWS\SysWOW64\Secur32.dll</text>
<text x="89.6" y="912.2" textLength="704.306" lengthAdjust="spacingAndGlyphs">ModLoad: 703a0000 70411000   C:\WINDOWS\SysWOW64\MSVCP120.dll</text>
<text x="89.6" y="936.8" textLength="704.306" lengthAdjust="spacingAndGlyphs">ModLoad: 70420000 7050e000   C:\WINDOWS\SysWOW64\MSVCR120.dll</text>
<text x="89.6" y="961.4" textLength="692.76" lengthAdjust="spacingAndGlyphs">ModLoad: 72340000 72361000   C:\WINDOWS\SysWOW64\SSPICLI.DLL</text>
<text x="89.6" y="986" textLength="692.76" lengthAdjust="spacingAndGlyphs">ModLoad: 70aa0000 70ab1000   C:\WINDOWS\SysWOW64\napinsp.dll</text>
<text x="89.6" y="1010.6" textLength="692.76" lengthAdjust="spacingAndGlyphs">ModLoad: 70380000 70396000   C:\WINDOWS\SysWOW64\pnrpnsp.dll</text>
<text x="89.6" y="1035.2" textLength="681.214" lengthAdjust="spacingAndGlyphs">ModLoad: 70370000 70380000   C:\WINDOWS\SysWOW64\wshbth.dll</text>
<text x="89.6" y="1059.8" textLength="681.214" lengthAdjust="spacingAndGlyphs">ModLoad: 70350000 70366000   C:\WINDOWS\SysWOW64\NLAapi.dll</text>
<text x="89.6" y="1084.4" textLength="692.76" lengthAdjust="spacingAndGlyphs">ModLoad: 72a60000 72ab2000   C:\WINDOWS\SysWOW64\mswsock.dll</text>
<text x="89.6" y="1109" textLength="681.214" lengthAdjust="spacingAndGlyphs">ModLoad: 729a0000 72a31000   C:\WINDOWS\SysWOW64\DNSAPI.dll</text>
<text x="89.6" y="1133.6" textLength="646.576" lengthAdjust="spacingAndGlyphs">ModLoad: 77580000 77587000   C:\WINDOWS\SysWOW64\NSI.dll</text>
<text x="89.6" y="1158.2" textLength="681.214" lengthAdjust="spacingAndGlyphs">ModLoad: 70340000 7034e000   C:\WINDOWS\SysWOW64\winrnr.dll</text>
<text x="89.6" y="1182.8" textLength="704.306" lengthAdjust="spacingAndGlyphs">ModLoad: 72950000 72958000   C:\Windows\SysWOW64\rasadhlp.dll</text>
<text x="89.6" y="1207.4" textLength="704.306" lengthAdjust="spacingAndGlyphs">ModLoad: 728f0000 72949000   C:\WINDOWS\SysWOW64\fwpuclnt.dll</text>
<text x="89.6" y="1232" textLength="1016.05" lengthAdjust="spacingAndGlyphs">ModLoad: 702a0000 70336000   C:\Program Files (x86)\Common Files\System\msadc\msadce.dll</text>
<text x="89.6" y="1256.6" textLength="1027.59" lengthAdjust="spacingAndGlyphs">ModLoad: 07320000 07323000   C:\Program Files (x86)\Common Files\System\msadc\msadcer.dll</text>
<text x="89.6" y="1281.2" textLength="1027.59" lengthAdjust="spacingAndGlyphs">ModLoad: 07320000 07323000   C:\Program Files (x86)\Common Files\System\msadc\msadcer.dll</text>
</g>
<rect x="80.6" y="1345.3" width="1842.6" height="27.4" fill="#eeeef2" stroke="#a9a9b0" stroke-width="2"/>
<rect x="157.6" y="1345.3" width="2.6" height="27.5" fill="#a9a9b0"/>
<text class="d" font-size="18.4" x="86.4" y="1365.4" textLength="69.276" lengthAdjust="spacingAndGlyphs">*BUSY*</text>
<text class="d" font-size="18.4" x="163.6" y="1365.4" textLength="254.012" lengthAdjust="spacingAndGlyphs">Debuggee is running...</text>
<rect x="79.2" y="1383.3" width="894.6" height="366.3" fill="#fff" stroke="#a9a9ad" stroke-width="2"/>
<rect x="80" y="1384.1" width="892.6" height="37.4" fill="#eeeef2"/>
<text class="s" x="83.4" y="1405.9" font-size="17.6" fill="#1e1e1e" textLength="48.7" lengthAdjust="spacingAndGlyphs">Watch</text>
<path d="M875.5 1399.5 L886.9 1399.5 L881.2 1405.8Z" fill="#1e1e1e"/>
<g transform="translate(917 1400) rotate(45)" fill="none" stroke="#1e1e1e" stroke-width="1.5"><path d="M-3.4 -9 L3.4 -9 L3.4 -1.5 L6 1.5 L-6 1.5 L-3.4 -1.5Z"/><path d="M0 1.5 L0 10.5"/></g>
<path d="M946.3 1394.4 L959.8 1407.9 M959.8 1394.4 L946.3 1407.9" fill="none" stroke="#1e1e1e" stroke-width="1.9"/>
<line x1="80" y1="1448.6" x2="972.6" y2="1448.6" stroke="#ececf0" stroke-width="1.6" />
<rect x="377.6" y="1421.5" width="2" height="27" fill="#ececf0"/>
<rect x="827.7" y="1421.5" width="2" height="27" fill="#ececf0"/>
<text class="s" x="207" y="1440.8" font-size="17.6" fill="#1e1e1e" textLength="45.9" lengthAdjust="spacingAndGlyphs">Name</text>
<text class="s" x="582.5" y="1440.8" font-size="17.6" fill="#1e1e1e" textLength="43.5" lengthAdjust="spacingAndGlyphs">Value</text>
<svg x="950" y="1420" width="22.9" height="30" overflow="hidden">
<text class="s" x="11.9" y="20.8" font-size="17.6" fill="#1e1e1e" textLength="32.5" lengthAdjust="spacingAndGlyphs">Type</text>
</svg>
<rect x="123" y="1451.5" width="249.2" height="21.4" fill="#fff" stroke="#000" stroke-width="2"/>
<text class="s" x="142.3" y="1468.8" font-size="17.6" fill="#767676" textLength="210.1" lengthAdjust="spacingAndGlyphs">Add new watch expression</text>
<rect x="80" y="1723.6" width="892.6" height="25" fill="#eeeef2"/>
<rect x="83.3" y="1726.5" width="24.2" height="19.6" fill="#eeeef2" stroke="#a39c8c" stroke-width="2"/>
<path d="M98.5 1730.8 L98.5 1742 L92.1 1736.4Z" fill="#000"/>
<rect x="107.5" y="1726.5" width="709.2" height="19.6" fill="#eeeef2" stroke="#a39c8c" stroke-width="2"/>
<rect x="947" y="1726.5" width="24.6" height="19.6" fill="#eeeef2" stroke="#a39c8c" stroke-width="2"/>
<path d="M956.3 1730.8 L956.3 1742 L962.7 1736.4Z" fill="#000"/>
<path d="M149.3 1749 L149.3 1779.5 L218.8 1779.5 L218.8 1749" fill="#fff" stroke="#a9a9ad" stroke-width="2"/>
<rect x="150" y="1748" width="68" height="3" fill="#fff"/>
<text class="s" x="89.7" y="1770.6" font-size="17.6" fill="#1e1e1e" textLength="47.5" lengthAdjust="spacingAndGlyphs">Locals</text>
<text class="s" x="159.6" y="1770.6" font-size="17.6" fill="#1e1e1e" textLength="49" lengthAdjust="spacingAndGlyphs">Watch</text>
<rect x="984" y="1383.3" width="941" height="366.3" fill="#fff" stroke="#aeaaa6" stroke-width="2"/>
<rect x="985" y="1384.3" width="939" height="35.3" fill="#007acc"/>
<text class="s" x="989" y="1406" font-size="17.6" fill="#fff" textLength="61.4" lengthAdjust="spacingAndGlyphs">Threads</text>
<path d="M1826.4 1398.8 L1838.4 1398.8 L1832.4 1405.2Z" fill="#fff"/>
<g transform="translate(1868.5 1400.5) rotate(45)" fill="none" stroke="#fff" stroke-width="1.5"><path d="M-3.4 -9 L3.4 -9 L3.4 -1.5 L6 1.5 L-6 1.5 L-3.4 -1.5Z"/><path d="M0 1.5 L0 10.5"/></g>
<path d="M1897 1394.2 L1910.6 1407.8 M1910.6 1394.2 L1897 1407.8" fill="none" stroke="#fff" stroke-width="1.9"/>
<text class="s" x="996.3" y="1443.1" font-size="17.6" fill="#111" textLength="313.5" lengthAdjust="spacingAndGlyphs" font-weight="bold">[0x2f78] = jpa+0x7a6260 (00ba6260)</text>
<text class="s" x="996.3" y="1474.8" font-size="17.6" fill="#222" textLength="358.6" lengthAdjust="spacingAndGlyphs">[0x2f70] = ntdll!TppWorkerThread (776559c0)</text>
<text class="s" x="996.3" y="1505.7" font-size="17.6" fill="#222" textLength="358.6" lengthAdjust="spacingAndGlyphs">[0x2f80] = ntdll!TppWorkerThread (776559c0)</text>
<text class="s" x="996.3" y="1536.9" font-size="17.6" fill="#222" textLength="362.3" lengthAdjust="spacingAndGlyphs">[0x2e70] = ntdll!TppWorkerThread (776559c0)</text>
<path d="M984 1749 L984 1779.5 L1067.3 1779.5 L1067.3 1749" fill="#fff" stroke="#a9a9ad" stroke-width="2"/>
<rect x="985" y="1748" width="81.5" height="3" fill="#fff"/>
<text class="s" x="994.5" y="1770.6" font-size="17.6" fill="#1e1e1e" textLength="61.5" lengthAdjust="spacingAndGlyphs">Threads</text>
<text class="s" x="1079" y="1770.6" font-size="17.6" fill="#1e1e1e" textLength="41.2" lengthAdjust="spacingAndGlyphs">Stack</text>
<text class="s" x="1143" y="1770.6" font-size="17.6" fill="#1e1e1e" textLength="93" lengthAdjust="spacingAndGlyphs">Breakpoints</text>
<rect x="1924.2" y="441" width="1.8" height="932.5" fill="#cccedb"/>
<rect x="33" y="1789" width="1893" height="37" fill="#007acc"/>
<path d="M1856 1798 L1882.5 1798 L1882.5 1816.5 L1869 1816.5 L1862 1822.5 L1862 1816.5 L1856 1816.5Z" fill="#f0f0f0" stroke="#3c3c3c" stroke-width="1.6"/>
<path d="M1854.6 1796.6 L1883.9 1796.6 L1883.9 1817.9 L1869.6 1817.9 L1860.6 1825 L1860.6 1817.9 L1854.6 1817.9Z" fill="none" stroke="#fff" stroke-width="1.2"/>
<text class="s" x="1892" y="1814.6" font-size="17.5" fill="#fff" font-weight="bold">1</text>
</svg>
</body></html>
